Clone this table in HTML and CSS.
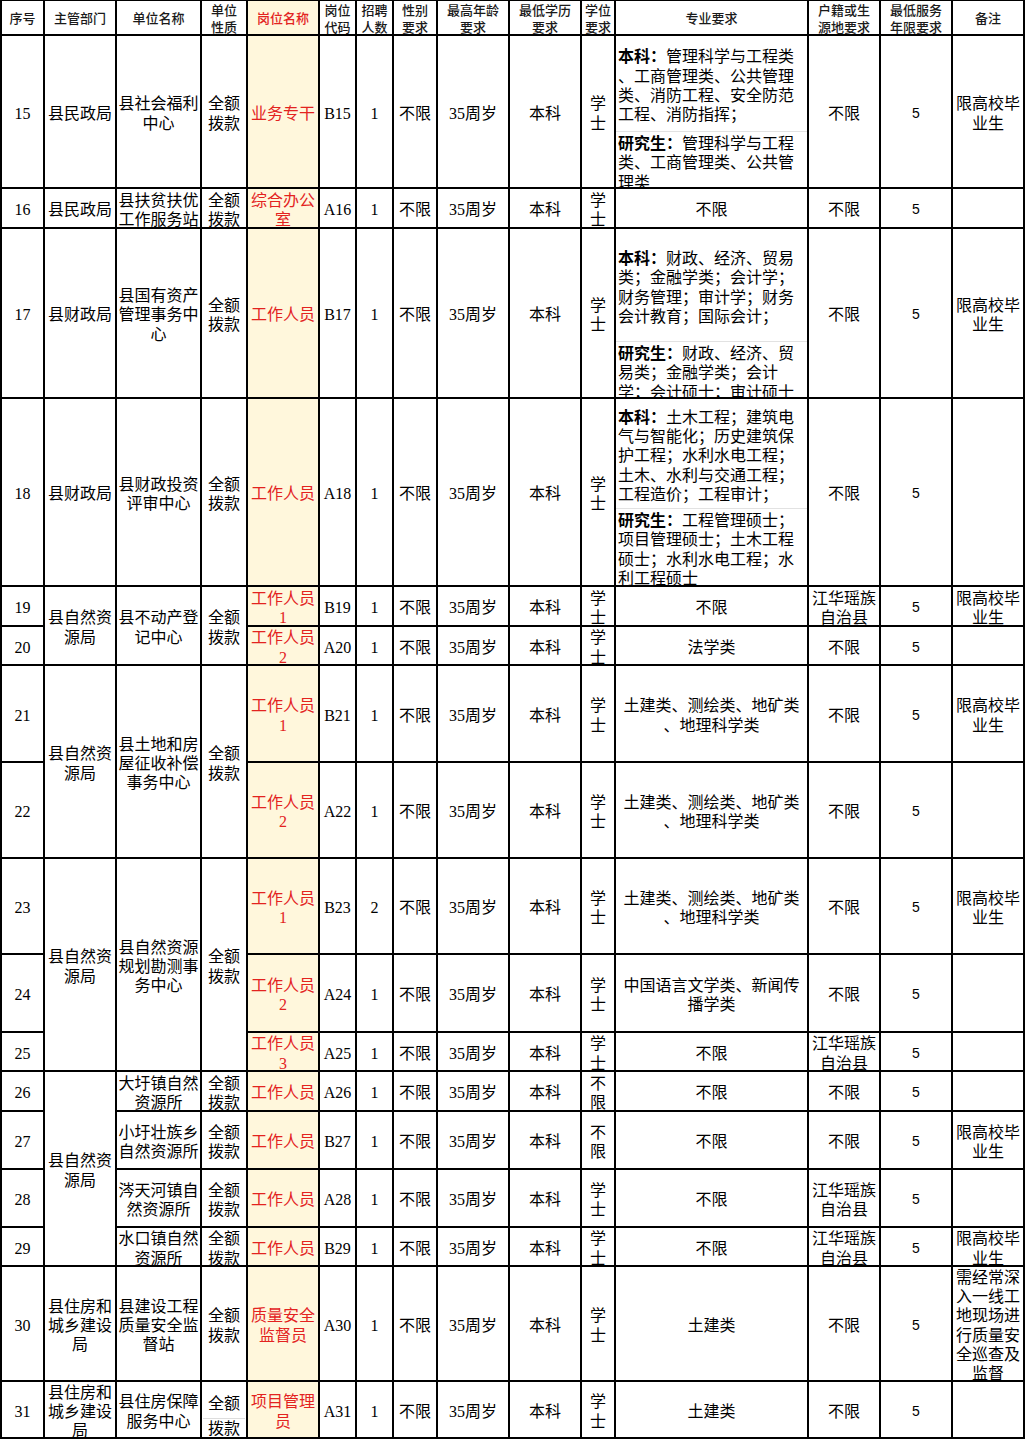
FILE: index.html
```html
<!DOCTYPE html>
<html lang="zh-CN">
<head>
<meta charset="utf-8">
<title>招聘岗位表</title>
<link rel="stylesheet" href="styles.css">
</head>
<body>
<div class="sheet">
  <!-- header -->
  <div class="c h"><span>序号</span></div>
  <div class="c h"><span>主管部门</span></div>
  <div class="c h"><span>单位名称</span></div>
  <div class="c h"><span>单位<br>性质</span></div>
  <div class="c h post"><span>岗位名称</span></div>
  <div class="c h"><span>岗位<br>代码</span></div>
  <div class="c h"><span>招聘<br>人数</span></div>
  <div class="c h"><span>性别<br>要求</span></div>
  <div class="c h"><span>最高年龄<br>要求</span></div>
  <div class="c h"><span>最低学历<br>要求</span></div>
  <div class="c h"><span>学位<br>要求</span></div>
  <div class="c h"><span>专业要求</span></div>
  <div class="c h"><span>户籍或生<br>源地要求</span></div>
  <div class="c h"><span>最低服务<br>年限要求</span></div>
  <div class="c h"><span>备注</span></div>

  <!-- 15 -->
  <div class="c">15</div>
  <div class="c">县民政局</div>
  <div class="c">县社会福利中心</div>
  <div class="c">全额拨款</div>
  <div class="c post">业务专干</div>
  <div class="c">B15</div>
  <div class="c">1</div>
  <div class="c">不限</div>
  <div class="c">35周岁</div>
  <div class="c">本科</div>
  <div class="c">学士</div>
  <div class="c rich">
    <div class="up u15"><span><b>本科：</b>管理科学与工程类<br>、工商管理类、公共管理<br>类、消防工程、安全防范<br>工程、消防指挥；</span></div>
    <div class="lo"><span><b>研究生：</b>管理科学与工程<br>类、工商管理类、公共管<br>理类</span></div>
  </div>
  <div class="c">不限</div>
  <div class="c n5">5</div>
  <div class="c">限高校毕业生</div>

  <!-- 16 -->
  <div class="c">16</div>
  <div class="c">县民政局</div>
  <div class="c">县扶贫扶优工作服务站</div>
  <div class="c">全额拨款</div>
  <div class="c post">综合办公室</div>
  <div class="c">A16</div>
  <div class="c">1</div>
  <div class="c">不限</div>
  <div class="c">35周岁</div>
  <div class="c">本科</div>
  <div class="c">学士</div>
  <div class="c">不限</div>
  <div class="c">不限</div>
  <div class="c n5">5</div>
  <div class="c"></div>

  <!-- 17 -->
  <div class="c">17</div>
  <div class="c">县财政局</div>
  <div class="c">县国有资产管理事务中心</div>
  <div class="c">全额拨款</div>
  <div class="c post">工作人员</div>
  <div class="c">B17</div>
  <div class="c">1</div>
  <div class="c">不限</div>
  <div class="c">35周岁</div>
  <div class="c">本科</div>
  <div class="c">学士</div>
  <div class="c rich">
    <div class="up u17"><span><b>本科：</b>财政、经济、贸易<br>类；金融学类；会计学；<br>财务管理；审计学；财务<br>会计教育；国际会计；</span></div>
    <div class="lo"><span><b>研究生：</b>财政、经济、贸<br>易类；金融学类；会计<br>学；会计硕士；审计硕士</span></div>
  </div>
  <div class="c">不限</div>
  <div class="c n5">5</div>
  <div class="c">限高校毕业生</div>

  <!-- 18 -->
  <div class="c">18</div>
  <div class="c">县财政局</div>
  <div class="c">县财政投资评审中心</div>
  <div class="c">全额拨款</div>
  <div class="c post">工作人员</div>
  <div class="c">A18</div>
  <div class="c">1</div>
  <div class="c">不限</div>
  <div class="c">35周岁</div>
  <div class="c">本科</div>
  <div class="c">学士</div>
  <div class="c rich">
    <div class="up u18"><span><b>本科：</b>土木工程；建筑电<br>气与智能化；历史建筑保<br>护工程；水利水电工程；<br>土木、水利与交通工程；<br>工程造价；工程审计；</span></div>
    <div class="lo"><span><b>研究生：</b>工程管理硕士；<br>项目管理硕士；土木工程<br>硕士；水利水电工程；水<br>利工程硕士</span></div>
  </div>
  <div class="c">不限</div>
  <div class="c n5">5</div>
  <div class="c"></div>

  <!-- 19 -->
  <div class="c">19</div>
  <div class="c r2">县自然资源局</div>
  <div class="c r2">县不动产登记中心</div>
  <div class="c r2">全额拨款</div>
  <div class="c post">工作人员1</div>
  <div class="c">B19</div>
  <div class="c">1</div>
  <div class="c">不限</div>
  <div class="c">35周岁</div>
  <div class="c">本科</div>
  <div class="c">学士</div>
  <div class="c">不限</div>
  <div class="c">江华瑶族自治县</div>
  <div class="c n5">5</div>
  <div class="c">限高校毕业生</div>

  <!-- 20 -->
  <div class="c">20</div>
  <div class="c post">工作人员2</div>
  <div class="c">A20</div>
  <div class="c">1</div>
  <div class="c">不限</div>
  <div class="c">35周岁</div>
  <div class="c">本科</div>
  <div class="c">学士</div>
  <div class="c">法学类</div>
  <div class="c">不限</div>
  <div class="c n5">5</div>
  <div class="c"></div>

  <!-- 21 -->
  <div class="c">21</div>
  <div class="c r2">县自然资源局</div>
  <div class="c r2">县土地和房屋征收补偿事务中心</div>
  <div class="c r2">全额拨款</div>
  <div class="c post">工作人员1</div>
  <div class="c">B21</div>
  <div class="c">1</div>
  <div class="c">不限</div>
  <div class="c">35周岁</div>
  <div class="c">本科</div>
  <div class="c">学士</div>
  <div class="c">土建类、测绘类、地矿类、地理科学类</div>
  <div class="c">不限</div>
  <div class="c n5">5</div>
  <div class="c">限高校毕业生</div>

  <!-- 22 -->
  <div class="c">22</div>
  <div class="c post">工作人员2</div>
  <div class="c">A22</div>
  <div class="c">1</div>
  <div class="c">不限</div>
  <div class="c">35周岁</div>
  <div class="c">本科</div>
  <div class="c">学士</div>
  <div class="c">土建类、测绘类、地矿类、地理科学类</div>
  <div class="c">不限</div>
  <div class="c n5">5</div>
  <div class="c"></div>

  <!-- 23 -->
  <div class="c">23</div>
  <div class="c r3">县自然资源局</div>
  <div class="c r3">县自然资源规划勘测事务中心</div>
  <div class="c r3">全额拨款</div>
  <div class="c post">工作人员1</div>
  <div class="c">B23</div>
  <div class="c">2</div>
  <div class="c">不限</div>
  <div class="c">35周岁</div>
  <div class="c">本科</div>
  <div class="c">学士</div>
  <div class="c">土建类、测绘类、地矿类、地理科学类</div>
  <div class="c">不限</div>
  <div class="c n5">5</div>
  <div class="c">限高校毕业生</div>

  <!-- 24 -->
  <div class="c">24</div>
  <div class="c post">工作人员2</div>
  <div class="c">A24</div>
  <div class="c">1</div>
  <div class="c">不限</div>
  <div class="c">35周岁</div>
  <div class="c">本科</div>
  <div class="c">学士</div>
  <div class="c">中国语言文学类、新闻传播学类</div>
  <div class="c">不限</div>
  <div class="c n5">5</div>
  <div class="c"></div>

  <!-- 25 -->
  <div class="c">25</div>
  <div class="c post">工作人员3</div>
  <div class="c">A25</div>
  <div class="c">1</div>
  <div class="c">不限</div>
  <div class="c">35周岁</div>
  <div class="c">本科</div>
  <div class="c">学士</div>
  <div class="c">不限</div>
  <div class="c">江华瑶族自治县</div>
  <div class="c n5">5</div>
  <div class="c"></div>

  <!-- 26 -->
  <div class="c">26</div>
  <div class="c r4">县自然资源局</div>
  <div class="c">大圩镇自然资源所</div>
  <div class="c">全额拨款</div>
  <div class="c post">工作人员</div>
  <div class="c">A26</div>
  <div class="c">1</div>
  <div class="c">不限</div>
  <div class="c">35周岁</div>
  <div class="c">本科</div>
  <div class="c">不限</div>
  <div class="c">不限</div>
  <div class="c">不限</div>
  <div class="c n5">5</div>
  <div class="c"></div>

  <!-- 27 -->
  <div class="c">27</div>
  <div class="c">小圩壮族乡自然资源所</div>
  <div class="c">全额拨款</div>
  <div class="c post">工作人员</div>
  <div class="c">B27</div>
  <div class="c">1</div>
  <div class="c">不限</div>
  <div class="c">35周岁</div>
  <div class="c">本科</div>
  <div class="c">不限</div>
  <div class="c">不限</div>
  <div class="c">不限</div>
  <div class="c n5">5</div>
  <div class="c">限高校毕业生</div>

  <!-- 28 -->
  <div class="c">28</div>
  <div class="c">涔天河镇自然资源所</div>
  <div class="c">全额拨款</div>
  <div class="c post">工作人员</div>
  <div class="c">A28</div>
  <div class="c">1</div>
  <div class="c">不限</div>
  <div class="c">35周岁</div>
  <div class="c">本科</div>
  <div class="c">学士</div>
  <div class="c">不限</div>
  <div class="c">江华瑶族自治县</div>
  <div class="c n5">5</div>
  <div class="c"></div>

  <!-- 29 -->
  <div class="c">29</div>
  <div class="c">水口镇自然资源所</div>
  <div class="c">全额拨款</div>
  <div class="c post">工作人员</div>
  <div class="c">B29</div>
  <div class="c">1</div>
  <div class="c">不限</div>
  <div class="c">35周岁</div>
  <div class="c">本科</div>
  <div class="c">学士</div>
  <div class="c">不限</div>
  <div class="c">江华瑶族自治县</div>
  <div class="c n5">5</div>
  <div class="c">限高校毕业生</div>

  <!-- 30 -->
  <div class="c">30</div>
  <div class="c">县住房和城乡建设局</div>
  <div class="c">县建设工程质量安全监督站</div>
  <div class="c">全额拨款</div>
  <div class="c post">质量安全监督员</div>
  <div class="c">A30</div>
  <div class="c">1</div>
  <div class="c">不限</div>
  <div class="c">35周岁</div>
  <div class="c">本科</div>
  <div class="c">学士</div>
  <div class="c">土建类</div>
  <div class="c">不限</div>
  <div class="c n5">5</div>
  <div class="c">需经常深入一线工地现场进行质量安全巡查及监督</div>

  <!-- 31 -->
  <div class="c">31</div>
  <div class="c">县住房和城乡建设局</div>
  <div class="c">县住房保障服务中心</div>
  <div class="c split"><span>全额</span><span class="b2">拨款</span></div>
  <div class="c post">项目管理员</div>
  <div class="c">A31</div>
  <div class="c">1</div>
  <div class="c">不限</div>
  <div class="c">35周岁</div>
  <div class="c">本科</div>
  <div class="c">学士</div>
  <div class="c">土建类</div>
  <div class="c">不限</div>
  <div class="c n5">5</div>
  <div class="c"></div>
</div>
</body>
</html>
```

FILE: styles.css
```css
html, body {
  margin: 0;
  padding: 0;
  background: #ffffff;
}

.sheet {
  display: grid;
  width: max-content;
  grid-template-columns: 41px 70px 83px 44px 70px 35px 35px 42px 70px 70px 32px 191px 70px 70px 70px;
  grid-template-rows: 33px 151px 38px 168px 186px 38px 37px 95px 94px 94px 76px 37px 38px 56px 56px 37px 113px 55px;
  gap: 2px;
  padding: 1px 2px 2px 2px;
  background: #000000;
  font-family: "Liberation Serif", "Noto Sans CJK SC", serif;
  font-size: 16px;
  line-height: 19.3px;
  color: #000000;
}

.c {
  background: #ffffff;
  display: flex;
  align-items: center;
  justify-content: center;
  text-align: center;
  overflow: hidden;
  padding: 4px 1px 0 1px;
  min-width: 0;
  min-height: 0;
  line-break: anywhere;
  word-break: break-all;
  text-spacing-trim: space-all;
}

.h {
  font-family: "Noto Sans CJK SC", sans-serif;
  font-size: 13px;
  line-height: 16.5px;
  font-weight: 500;
  color: #1a1a1a;
  padding-top: 2px;
}

.post {
  background: #fff7dc;
  color: #e3231f;
}

.r2 { grid-row: span 2; }
.r3 { grid-row: span 3; }
.r4 { grid-row: span 4; }

.n5 {
  font-family: "Liberation Sans", "Noto Sans CJK SC", sans-serif;
  font-size: 14px;
}

.rich {
  flex-direction: column;
  align-items: stretch;
  justify-content: flex-start;
  text-align: left;
  padding: 0;
  white-space: nowrap;
}

.rich .up {
  flex: none;
  box-sizing: border-box;
  display: flex;
  flex-direction: column;
  justify-content: center;
  border-bottom: 1px solid #e2e2e2;
  padding: 5px 0 0 2px;
  overflow: hidden;
}

.rich .lo {
  flex: none;
  padding: 2px 0 0 2px;
}

.rich b {
  font-weight: 700;
}

.u15 { height: 96px; }
.u17 { height: 113px; }
.u18 { height: 110px; }

.split {
  flex-direction: column;
  align-items: stretch;
  justify-content: flex-start;
  padding-top: 12px;
}

.split span {
  display: block;
}

.split .b2 {
  margin-top: 5px;
  border-top: 1px solid #dddddd;
}
```
